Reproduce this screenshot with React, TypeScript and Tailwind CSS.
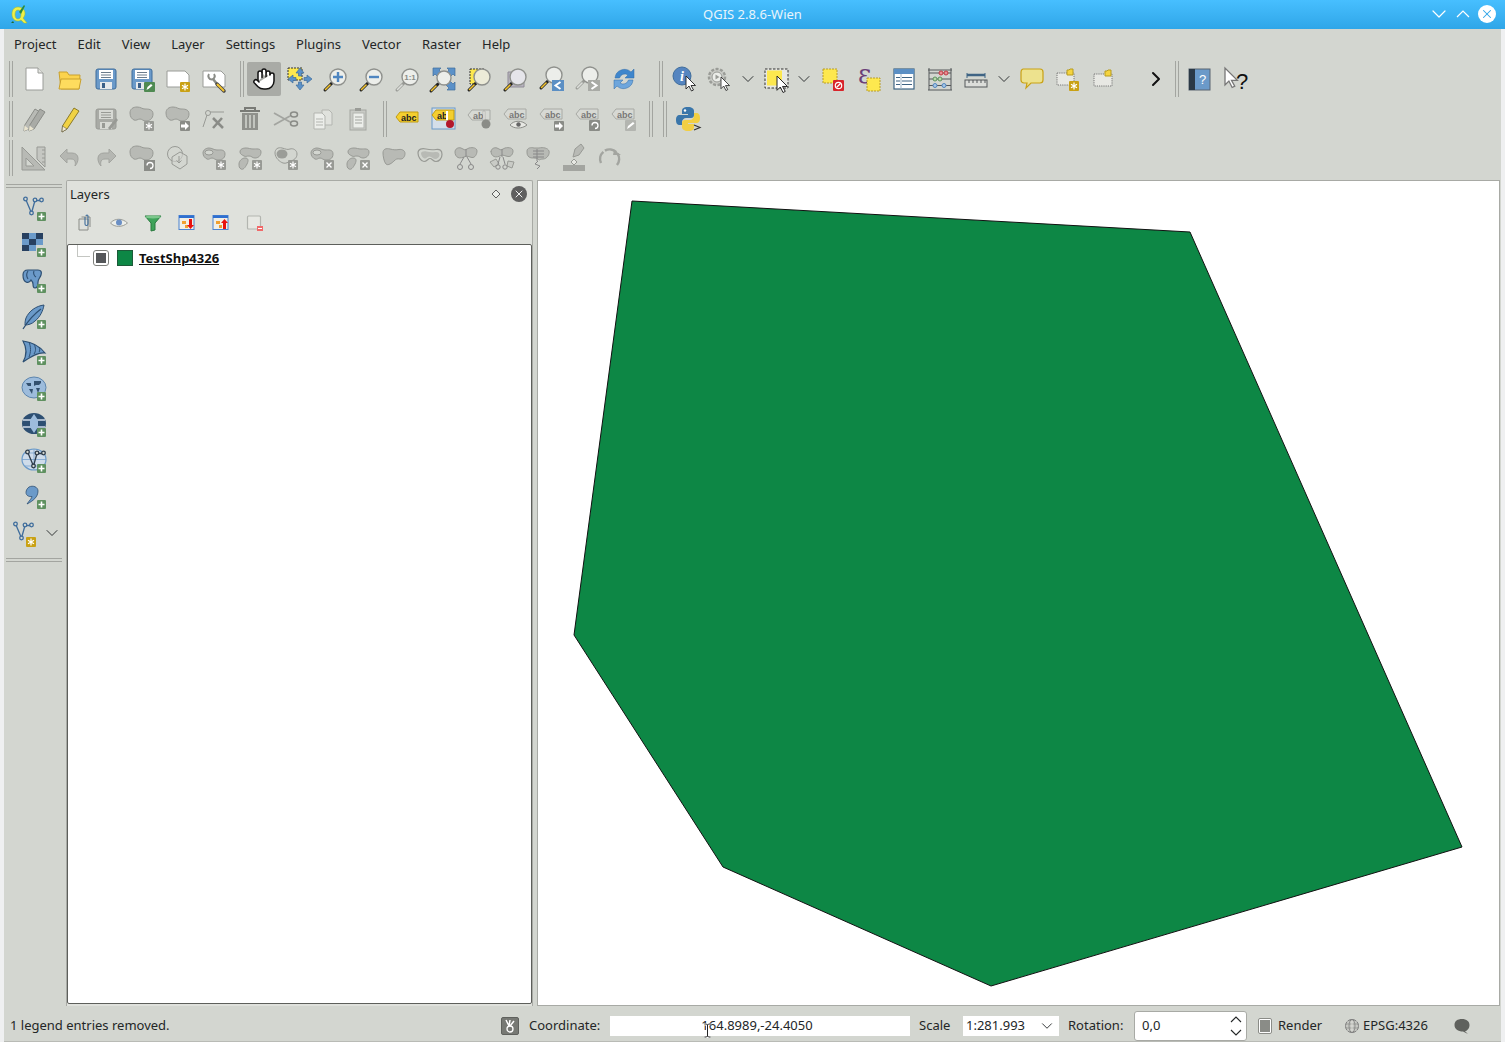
import React from "react";
import { Hand, ChevronDown, ChevronRight, X } from "lucide-react";

const GF = "#b8bab5";
const GS = "#989a95";
const BF = "#6b9ac9";
const BS = "#3f6d9c";

const S = ({ children, s = 28 }: { children?: React.ReactNode; s?: number }) => (
  <svg width={s} height={s} viewBox={`0 0 ${s} ${s}`} className="block shrink-0 overflow-visible">{children}</svg>
);
const Cell = ({ children, active }: { children?: React.ReactNode; active?: boolean }) => (
  <div className="w-9 h-9 shrink-0 flex items-center justify-center">
    <div className={`w-[34px] h-[34px] flex items-center justify-center rounded-[2px] ${active ? "bg-[#a9aba6]" : ""}`}>{children}</div>
  </div>
);
const Chev = ({ w = "w-5" }: { w?: string }) => (
  <div className={`${w} shrink-0 flex items-center justify-center text-[#232627]`}><ChevronDown size={20} strokeWidth={1.100} /></div>
);
const Sep = ({ cls }: { cls: string }) => (
  <div className={`${cls} shrink-0 h-[36px] flex gap-[2px]`}>
    <div className="w-px h-full bg-[#a3a5a0]" />
    <div className="w-px h-full bg-[#a3a5a0]" />
  </div>
);

const Cursor = ({ x, y, k = 1 }: { x: number; y: number; k?: number }) => (
  <path transform={`translate(${x} ${y}) scale(${k})`} d="M0 0v13l3-3 2.500 5 2-1-2.500-4.500h4.500z" fill="#fff" stroke="#222" strokeWidth="0.900" />
);
const Star = ({ x = 16, y = 16, f = GS }: { x?: number; y?: number; f?: string }) => (
  <g>
    <rect x={x} y={y} width="10" height="10" rx="1" fill={f} />
    <path transform={`translate(${x + 5} ${y + 5})`} d="M0-3.500V3.500M-3-1.800L3 1.800M-3 1.800L3-1.800" stroke="#fff" strokeWidth="1.200" />
  </g>
);
const Cross = ({ x = 16, y = 16 }: { x?: number; y?: number }) => (
  <g>
    <rect x={x} y={y} width="10" height="10" rx="1" fill={GS} />
    <path transform={`translate(${x} ${y})`} d="M2.500 2.500l5 5M7.500 2.500l-5 5" stroke="#fff" strokeWidth="1.400" />
  </g>
);
const Plus = ({ x = 17, y = 17 }: { x?: number; y?: number }) => (
  <g>
    <rect x={x} y={y} width="9" height="9" rx="1" fill="#5f9160" />
    <path transform={`translate(${x} ${y})`} d="M4.500 1.500v6M1.500 4.500h6" stroke="#fff" strokeWidth="1.600" />
  </g>
);
const Arrow = ({ x = 16, y = 16, f = "#8a8c87" }: { x?: number; y?: number; f?: string }) => (
  <g>
    <rect x={x} y={y} width="10" height="10" rx="1" fill={f} />
    <path transform={`translate(${x} ${y})`} d="M1 3.500h4V1l4 4-4 4V6.500H1z" fill="#fff" />
  </g>
);
const BLOB = "M2 8c0-4 3-6 7-6s5 2 8 2 8 0 8 5-4 7-7 7-4-2-6-2-4 2-6 1-4-3-4-7z";
const Blob = () => <path d={BLOB} fill={GF} stroke={GS} />;
const Ring = () => (
  <g>
    <path d="M3 9c0-3 3-5 6-5s5 2 8 2 8-1 8 4-4 6-7 6-4-2-6-2-3 2-5 1-4-3-4-6z" fill={GF} stroke={GS} />
    <ellipse cx="9" cy="8.500" rx="4" ry="2.500" fill="#d3d6d0" stroke={GS} />
  </g>
);
const Two = () => (
  <g>
    <path d="M4 8c0-3 3-4 6-4s4 1 7 1 8-1 8 3-3 6-6 6-3-2-6-2-3 1-5 0-4-2-4-4z" fill={GF} stroke={GS} />
    <path d="M3 20c0-3 3-6 6-6s4 2 2 6-4 6-6 5-2-3-2-5z" fill={GF} stroke={GS} />
  </g>
);
const Mag = ({ cx = 16, cy = 12, r = 8, f = "#eceeea", yellow = true, s = "#8f918d" }: { cx?: number; cy?: number; r?: number; f?: string; yellow?: boolean; s?: string }) => (
  <g>
    <line x1={cx - 6} y1={cy + 6} x2={cx - 13} y2={cy + 13} stroke={yellow ? "#222" : "#9a9c97"} strokeWidth="3" strokeLinecap="round" />
    <line x1={cx - 8} y1={cy + 8} x2={cx - 12.500} y2={cy + 12.500} stroke={yellow ? "#f2c32f" : "#dcdeda"} strokeWidth="1.600" strokeLinecap="round" />
    <circle cx={cx} cy={cy} r={r} fill={f} stroke={s} strokeWidth="1.400" />
  </g>
);
const Tag = ({ dx = 0, dy = 0, t = "abc", fill = "#d7d9d4", stroke = "#a8aaa5", col = "#777" }: { dx?: number; dy?: number; t?: string; fill?: string; stroke?: string; col?: string }) => (
  <g transform={`translate(${dx} ${dy})`}>
    <path d="M2 10l4-5h18v10H6z" fill={fill} stroke={stroke} />
    <text x="7" y="13.500" fontSize="9" fontWeight="700" fontFamily="Liberation Sans, sans-serif" fill={col}>{t}</text>
  </g>
);

/* Row 1 */
const NewFile = () => <S><path d="M6 3h12l5 5v17H6z" fill="#fff" stroke="#9a9c98" /><path d="M18 3v5h5" fill="#e3e4e0" stroke="#9a9c98" /></S>;
const Open = () => <S><path d="M3 7h8l2 3h11l-1 14H5z" fill="#fbd34d" stroke="#c9a12e" /><path d="M3 24l2-10h20l-2 10z" fill="#fedc5e" stroke="#c9a12e" /></S>;
const Floppy = ({ g = false }: { g?: boolean }) => (
  <g>
    <rect x="4" y="4" width="20" height="20" rx="2" fill={g ? "#a8aaa5" : "#6b9ac9"} stroke={g ? GS : "#3f6d9c"} />
    <rect x="7" y="5" width="14" height="9" fill={g ? "#d7d9d4" : "#fff"} />
    <path d="M9 7.500h10M9 10h10M9 12.500h10" stroke={g ? GS : "#6b7c8c"} />
    <rect x="8" y="17" width="12" height="7" fill={g ? "#d7d9d4" : "#e6e9ec"} />
    <rect x="10" y="18" width="3" height="5" fill={g ? GS : "#3a5f88"} />
  </g>
);
const Save = () => <S><Floppy /></S>;
const SaveAs = () => <S><Floppy /><rect x="16" y="17" width="11" height="10" rx="1" fill="#4f8a52" /><path d="M18.500 25l1-3 3.500-3 1.500 1.500-3.500 3z" fill="#fff" /></S>;
const NewPrint = () => <S><path d="M3 6h18l4 4v12H3z" fill="#fff" stroke="#9a9c98" /><Star x={16} y={17} f="#c9a114" /></S>;
const PrintMgr = () => (
  <S>
    <path d="M3 6h18l4 4v12H3z" fill="#fff" stroke="#9a9c98" />
    <path d="M9 9a3.500 3.500 0 0 0 3 5.500" fill="none" stroke="#8a8c87" strokeWidth="2" />
    <path d="M14 9a3.500 3.500 0 0 1-2 5.500" fill="none" stroke="#8a8c87" strokeWidth="2" />
    <path d="M13 14l4 5" stroke="#8a8c87" strokeWidth="2.500" />
    <path d="M17 19l7 7" stroke="#444" strokeWidth="3.500" strokeLinecap="round" />
    <path d="M17.500 19.500l6 6" stroke="#f2c32f" strokeWidth="2" strokeLinecap="round" />
  </S>
);
const PanSel = () => (
  <S>
    <rect x="2" y="3" width="14" height="12" fill="#fde84f" stroke="#333" strokeDasharray="2 1" />
    <path d="M14 3l4 5h-2.500v3h-3V8H10zM14 25l-4-5h2.500v-3h3v3H18zM2 14l5-4v2.500h3v3H7V18zM26 14l-5 4v-2.500h-3v-3h3V10z" fill="#5b91c8" stroke="#3f6d9c" strokeWidth="0.700" />
  </S>
);
const ZoomIn = () => <S><Mag /><path d="M16 7v10M11 12h10" stroke="#4f86c0" strokeWidth="2.400" /></S>;
const ZoomOut = () => <S><Mag /><path d="M11 12h10" stroke="#4f86c0" strokeWidth="2.400" /></S>;
const Zoom11 = () => <S><Mag yellow={false} /><text x="16" y="15" textAnchor="middle" fontSize="8" fontWeight="700" fontFamily="Liberation Sans, sans-serif" fill="#8a8c87">1:1</text></S>;
const ZoomFull = () => (
  <S>
    <path d="M3 3h8l-2 2 3 3-4 4-3-3-2 2zM25 3v8l-2-2-3 3-4-4 3-3-2-2zM25 25h-8l2-2-3-3 4-4 3 3 2-2z" fill="#5b91c8" stroke="#3f6d9c" strokeWidth="0.700" />
    <Mag cx={14} cy={13} r={7} />
  </S>
);
const ZoomSel = () => <S><rect x="4" y="4" width="14" height="15" fill="#fde84f" stroke="#333" strokeDasharray="2 1" /><Mag f="#ecebd8" /></S>;
const ZoomLayer = () => <S><path d="M6 7h16v15H6z" fill="#b9b5c0" stroke="#8f8b96" /><Mag f="#e5e5ea" /></S>;
const ZoomLast = () => <S><Mag cy={10} /><rect x="14" y="15" width="12" height="11" fill="#5b8fc4" /><path d="M22.500 17l-5 3.500 5 3.500" fill="none" stroke="#fff" strokeWidth="2" /></S>;
const ZoomNext = () => <S><Mag cy={10} yellow={false} /><rect x="14" y="15" width="12" height="11" fill="#a9aba6" /><path d="M17.500 17l5 3.500-5 3.500" fill="none" stroke="#fff" strokeWidth="2" /></S>;
const Refresh = () => (
  <S>
    <path d="M5 13a9.500 9.500 0 0 1 16-6l3-3v9h-9l3-3a5.500 5.500 0 0 0-8.500 3z" fill="#3f86cc" stroke="#2f6ba8" strokeWidth="0.500" />
    <path d="M23 15a9.500 9.500 0 0 1-16 6l-3 3v-9h9l-3 3a5.500 5.500 0 0 0 8.500-3z" fill="#6ea6dc" stroke="#2f6ba8" strokeWidth="0.500" />
  </S>
);
const Identify = () => <S><circle cx="12" cy="11" r="9" fill="#5585c0" stroke="#3f6d9c" /><text x="12" y="16" textAnchor="middle" fontSize="14" fontWeight="700" fontStyle="italic" fontFamily="Liberation Serif, serif" fill="#fff">i</text><Cursor x={16} y={11} /></S>;
const RunAct = () => <S><circle cx="11" cy="12" r="8" fill="#c9cbc6" stroke="#9a9c97" strokeWidth="2.500" strokeDasharray="3 1.500" /><circle cx="11" cy="12" r="5" fill="#eceeea" stroke={GS} /><path d="M9.500 9.500l4 2.500-4 2.500z" fill="#9a9c97" /><Cursor x={15} y={12} k={0.900} /></S>;
const Select = () => <S><rect x="3" y="4" width="23" height="19" fill="#e7e8e3" stroke="#333" strokeDasharray="2.500 1.500" /><rect x="5" y="5.500" width="15" height="15" fill="#fde84f" /><Cursor x={15} y={11} k={1.100} /></S>;
const Deselect = () => <S><rect x="5" y="4" width="14" height="14" fill="#fde84f" stroke="#b79c2a" strokeDasharray="2 1" /><rect x="15" y="15" width="11" height="11" rx="1" fill="#d8242a" /><circle cx="20.500" cy="20.500" r="3.200" fill="none" stroke="#fff" strokeWidth="1.200" /><path d="M18.500 22.500l4-4" stroke="#fff" strokeWidth="1.200" /></S>;
const SelExpr = () => <S><text x="4" y="18" fontSize="26" fontFamily="DejaVu Serif, serif" fill="#6b3f78">ε</text><rect x="13" y="13" width="13" height="13" fill="#fde84f" stroke="#b79c2a" strokeDasharray="2 1" /></S>;
const AttrTable = () => <S><rect x="4" y="4" width="20" height="20" fill="#fff" stroke="#3f6484" strokeWidth="1.200" /><rect x="4" y="4" width="20" height="5" fill="#5b8fc4" /><path d="M6 12.500h4M12 12.500h10M6 16h4M12 16h10M6 19.500h4M12 19.500h10" stroke="#3f6484" strokeWidth="1.200" /><path d="M11 9v15" stroke="#9fb4c6" /></S>;
const Abacus = () => (
  <S>
    <path d="M3 3v22M25 3v22M2 25h24M2 5h24" stroke="#55585a" strokeWidth="1" fill="none" />
    <path d="M3 8h22M3 14h22M3 20.500h22" stroke="#55585a" />
    <g fill="#e98d93" stroke="#c43b44"><circle cx="15" cy="8" r="2" /><circle cx="20" cy="8" r="2" /></g>
    <g fill="#b7dba9" stroke="#5f9160"><circle cx="9" cy="14" r="2" /><circle cx="14" cy="14" r="2" /></g>
    <g fill="#a7c6e4" stroke="#4f86c0"><circle cx="9" cy="20.500" r="2" /><circle cx="18" cy="20.500" r="2" /></g>
  </S>
);
const Ruler = () => <S><path d="M5 8v5M23 8v5" stroke="#3f6484" strokeWidth="1" /><path d="M5 10h18" stroke="#3f6484" strokeWidth="2.500" /><rect x="3" y="15" width="22" height="7" fill="#dcdeda" stroke="#55585a" /><path d="M7 15v3M11 15v3M15 15v3M19 15v3M23 15v3" stroke="#55585a" /></S>;
const Tip = () => <S><path d="M5 4h17a3 3 0 0 1 3 3v8a3 3 0 0 1-3 3H13l-5 5 1-5H6a3 3 0 0 1-3-3V7a3 3 0 0 1 2-3z" fill="#ede28e" stroke="#c9a114" strokeWidth="1.200" /></S>;
const BookmarkNew = () => <S><rect x="3" y="8" width="17" height="12" fill="#e7e8e3" stroke="#777" strokeDasharray="1.200 1" /><path d="M13 10V5h2l1-1h3v6z" fill="#f5d43f" stroke="#b79c1e" /><Star x={15} y={16} f="#c9a114" /></S>;
const Bookmarks = () => <S><rect x="4" y="9" width="18" height="12" fill="#e7e8e3" stroke="#777" strokeDasharray="1.200 1" /><path d="M15 11V6h2l1-1h3v6z" fill="#f5d43f" stroke="#b79c1e" /></S>;
const Help = () => <S><rect x="3" y="4" width="21" height="21" fill="#6b9ac9" stroke="#5a6570" /><rect x="3" y="4" width="6" height="21" fill="#2b3946" /><text x="16.500" y="19" textAnchor="middle" fontSize="13" fontFamily="Liberation Sans, sans-serif" fill="#fff">?</text></S>;
const WhatsThis = () => <S><path transform="translate(3 3) scale(1.300)" d="M0 0v13l3-3 2.500 5 2-1L5 9.500h4.500z" fill="#fff" stroke="#777" /><text x="20" y="24" textAnchor="middle" fontSize="22" fontFamily="Liberation Sans, sans-serif" fill="#111">?</text></S>;

/* Row 2 */
const PencilPath = ({ f, x = 0 }: { f: string; x?: number }) => (
  <g transform={`translate(${x} 0)`}>
    <path d="M18 4l5 3-11 17-5 2 .500-5.500z" fill={f} stroke="#8a8c87" />
    <path d="M7.500 20.500l4.500 3.500-5 2z" fill="#e9e4cf" />
  </g>
);
const Pencils = () => <S><PencilPath f={GF} x={-3} /><PencilPath f="#a9aba6" x={2} /></S>;
const Pencil = () => <S><path d="M18 3l5 3-12 18-5 3 .500-6z" fill="#f1d243" stroke="#8a7a2a" /><path d="M6.500 21l4.500 3-5 3z" fill="#f3ead0" stroke="#444" strokeWidth="0.500" /></S>;
const SaveEdit = () => <S><Floppy g /><path d="M16 23l8-10 2 2-8 10z" fill={GS} /></S>;
const Node = () => <S><circle cx="8" cy="8" r="2.500" fill="none" stroke={GS} /><path d="M7 10L3 22M10 7h14" stroke={GS} /><path d="M13 13l10 10M22 13l-9 10" stroke="#8a8c87" strokeWidth="2.500" /></S>;
const Trash = () => <S><path d="M9 5V3h10v2M4 6h20" stroke="#797b76" strokeWidth="2" fill="none" /><path d="M6 8h16v17H6z" fill="#8f918c" /><path d="M10 10v13M14 10v13M18 10v13" stroke="#d3d6d0" strokeWidth="1.500" /></S>;
const Scissors = () => <S><path d="M2 8l16 9M2 20l16-9" stroke="#a3a5a0" strokeWidth="1.800" /><ellipse cx="22" cy="9.500" rx="3.500" ry="2.500" fill="none" stroke="#8a8c87" strokeWidth="1.500" /><ellipse cx="22" cy="18.500" rx="3.500" ry="2.500" fill="none" stroke="#8a8c87" strokeWidth="1.500" /></S>;
const Copy = () => <S><path d="M14 5h7l3 3v12h-10z" fill="#e0e2dd" stroke="#b3b5b0" /><path d="M6 8h8l3 3v13H6z" fill="#eceeea" stroke="#b3b5b0" /><path d="M8 14h7M8 17h7M8 20h7" stroke="#b3b5b0" /></S>;
const Paste = () => <S><rect x="6" y="5" width="16" height="20" fill="#c9cbc6" stroke="#a3a5a0" /><rect x="9" y="8" width="11" height="15" fill="#eceeea" stroke="#b3b5b0" /><rect x="11" y="3" width="6" height="3" fill="#9a9c97" /><path d="M11 12h7M11 15h7M11 18h7" stroke="#a3a5a0" /></S>;
const LabelOn = () => <S><Tag dy={2} fill="#f4cf2f" stroke="#c29c10" col="#222" /></S>;
const LabelPin = () => <S><rect x="2" y="3" width="23" height="21" fill="#d5dfe9" stroke="#6b9ac9" /><Tag dy={0} t="ab" fill="#f4cf2f" stroke="#c29c10" col="#222" /><path d="M16 6h2v9h-2z" fill="#fff" /><circle cx="20" cy="19" r="4" fill="#b3182b" /></S>;
const LabelGray = () => <S><Tag t="ab" /><path d="M17 6h2v9h-2z" fill="#e7e8e3" stroke={GS} strokeWidth="0.500" /><circle cx="20" cy="19" r="4.500" fill="#8a8c87" /></S>;
const LabelEye = () => <S><Tag dy={-1} /><path d="M8 20c4-5 12-5 17 0-5 4-13 4-17 0z" fill="#e7e8e3" stroke="#8a8c87" /><circle cx="16.500" cy="19.500" r="2.200" fill="#666" /></S>;
const LabelMove = () => <S><Tag dy={-1} /><Arrow x={16} y={16} /></S>;
const LabelRot = () => <S><Tag dy={-1} /><rect x="15" y="15" width="11" height="11" rx="1" fill="#8a8c87" /><path d="M18 20.500a3 3 0 1 1 3 3" fill="none" stroke="#fff" strokeWidth="1.300" /></S>;
const LabelEdit = () => <S><Tag dy={-1} /><rect x="15" y="15" width="11" height="11" rx="1" fill="#b3b5b0" /><path d="M17 24l1-3 5-4 1.500 1.500-5 4z" fill="#fff" /></S>;
const Python = () => (
  <S>
    <path d="M14 2c-5 0-6 2-6 4v3h6v1H6c-3 0-4 2-4 5s1 5 4 5h2v-3c0-2 2-4 4-4h5c2 0 3-1 3-3V6c0-2-2-4-6-4z" fill="#3a76aa" />
    <path d="M14 26c5 0 6-2 6-4v-3h-6v-1h8c3 0 4-2 4-5s-1-5-4-5h-2v3c0 2-2 4-4 4h-5c-2 0-3 1-3 3v4c0 2 2 4 6 4z" fill="#f2cf43" />
    <circle cx="11" cy="5.500" r="1.200" fill="#fff" />
    <path d="M20 20l6 2.500-6 2.500" fill="none" stroke="#333" strokeWidth="1.200" />
  </S>
);

/* Row 3 */
const SetSquare = () => (
  <S>
    <path d="M2 3l23 23H2z" fill={GF} stroke={GS} />
    <path d="M6 14l8 8H6z" fill="#d3d6d0" stroke={GS} />
    <path d="M17 3h8v20l-8-8z" fill="#c5c7c2" stroke={GS} />
    <path d="M22 6h3M22 10h3M22 14h3M22 18h3" stroke={GS} />
  </S>
);
const Undo = () => <S><path d="M11 5l-7 7 7 7v-4h4c4 0 5 3 4 7 4-4 5-13-3-13h-5z" fill="#b5b7b2" stroke="#a3a5a0" /></S>;
const Redo = () => <S><path d="M17 5l7 7-7 7v-4h-4c-4 0-5 3-4 7-4-4-5-13 3-13h5z" fill="#b5b7b2" stroke="#a3a5a0" /></S>;
const BlobRot = () => <S><Blob /><rect x="16" y="16" width="11" height="11" fill="#8a8c87" /><path d="M19 21.500a3 3 0 1 1 3 3" fill="none" stroke="#fff" strokeWidth="1.300" /></S>;
const HexCirc = () => <S><circle cx="11" cy="10" r="7.500" fill="#d3d6d0" stroke={GS} /><path d="M16 8l7 4v8l-7 5-8-5v-7z" fill="#d3d6d0" fillOpacity="0.600" stroke={GS} /><path d="M15 12v7m-2.500-2.500L15 19l2.500-2.500" fill="none" stroke={GS} /></S>;
const RingStar = () => <S><Ring /><Star /></S>;
const TwoStar = () => <S><Two /><Star /></S>;
const InnerStar = () => <S><path d="M3 9c0-4 3-6 7-5s5 2 8 1 7 1 7 5-3 6-6 7-5 3-8 2-8-5-8-10z" fill="none" stroke={GS} /><ellipse cx="10" cy="10" rx="5.500" ry="4.500" fill="#9b9d98" /><Star /></S>;
const RingX = () => <S><Ring /><Cross /></S>;
const TwoX = () => <S><Two /><Cross /></S>;
const BlobLine = () => <S><path d="M3 9c0-4 3-5 7-4s6 1 9 .5 6 1 6 4-2 6-5 5.500-4 0-6 2-6 5-8 3-3-8-3-11z" fill={GF} stroke={GS} /></S>;
const BlobDouble = () => <S><path d="M2 9c0-4 4-5 8-4s6 1 10 .5 6 1 6 5-3 7-6 7-4-3-6-3-3 3-6 3-6-5-6-8.500z" fill="#d3d6d0" stroke={GS} strokeWidth="1.200" /><path d="M5 9.500c0-2 3-2.500 5.500-2s5 1 8.500.5 4.500 1 4.500 3-2 4-4.500 4-3-2.500-5.500-2.500-3 2.500-5 2-3.500-3.500-3.500-5z" fill={GF} /></S>;
const Split = () => <S><path d="M3 8c0-3 3-5 6-4l4 2 4-2c4-1 8 0 8 3s-2 7-5 6.500-5-2-7-1-5 2-7 1-3-3-3-5.500z" fill={GF} stroke={GS} /><path d="M14 5v8M12 13l-4 7M15 13l4 7" stroke="#888" /><circle cx="8" cy="23" r="2.500" fill="none" stroke="#888" /><circle cx="19" cy="23" r="2.500" fill="none" stroke="#888" /></S>;
const SplitP = () => <S><path d="M3 8c0-3 3-5 6-4l4 2 4-2c4-1 8 0 8 3s-2 6-5 5.500-5-2-7-1-5 2-7 1-3-3-3-5z" fill={GF} stroke={GS} /><path d="M2 18l6-3 3 5-5 3zM20 17l6 1-2 6-5-2z" fill="#c9cbc6" stroke={GS} /><path d="M14 5v8M12 13l-2 7M15 13l2 7" stroke="#888" /><circle cx="10" cy="23" r="2.200" fill="none" stroke="#888" /><circle cx="17" cy="23" r="2.200" fill="none" stroke="#888" /></S>;
const Merge = () => <S><path d="M3 7c0-3 4-4 7-3l5 0c4-1 9 0 10 3s-2 8-6 8-3 2-5 0-7 0-9-2-2-3-2-6z" fill={GF} stroke={GS} /><path d="M13 5v12M9 7h11M9 10h11M9 13h11" stroke="#888" /><path d="M14 17l-3 3 5 2-3 3" fill="none" stroke="#888" /></S>;
const Offset = () => <S><path d="M3 27v-6h22v6z" fill="#a3a5a0" /><path d="M14 21l-3-3 3-3 3 3z" fill="#e7e8e3" stroke={GS} /><path d="M13 13l2-8 6-5 3 4-5 7z" fill={GF} stroke={GS} /></S>;
const Rotate = () => <S><path d="M5 19A9.500 9.500 0 1 1 20 22" fill="none" stroke="#a3a5a0" strokeWidth="2.500" strokeDasharray="12 2" /><path d="M18 6l7 5h-8z" fill="#a3a5a0" /></S>;

/* Left bar */
const VPath = ({ dx = 0, dy = 0, s = BS }: { dx?: number; dy?: number; s?: string }) => (
  <g transform={`translate(${dx} ${dy})`} fill="none" stroke={s} strokeWidth="1.300">
    <path d="M4 5l5.500 13L13 5.500h6" />
    <circle cx="3.500" cy="4" r="1.800" fill="#d3d6d0" />
    <circle cx="9.500" cy="18" r="1.800" fill="#d3d6d0" />
    <circle cx="13" cy="5" r="1.800" fill="#d3d6d0" />
    <circle cx="19.500" cy="5" r="1.800" fill="#d3d6d0" />
  </g>
);
const LVec = () => <S><VPath dx={2} dy={0} /><Plus /></S>;
const LRas = () => (
  <S>
    <rect x="2" y="2" width="7" height="6" fill="#274060" /><rect x="9" y="2" width="7" height="6" fill={BF} /><rect x="16" y="2" width="7" height="6" fill="#274060" />
    <rect x="2" y="8" width="7" height="6" fill={BF} /><rect x="9" y="8" width="7" height="6" fill="#274060" /><rect x="16" y="8" width="7" height="6" fill={BF} />
    <rect x="2" y="14" width="7" height="6" fill="#274060" /><rect x="9" y="14" width="7" height="6" fill={BF} />
    <Plus />
  </S>
);
const LPg = () => (
  <S>
    <path d="M3 8c0-3 2-5 5-5h10c3 0 4 2 3 5s-3 4-3 7c0 4-1 6-3 6s-2-2-2-4c0-2-1-3-2-4-1 2-3 3-5 2s-3-4-3-7z" fill={BF} stroke="#2d4f72" strokeWidth="1.200" />
    <path d="M8 4c-2 3-2 5 0 8M14 4c-1 2 0 5 2 6" fill="none" stroke="#2d4f72" strokeWidth="1.100" />
    <Plus />
  </S>
);
const LFeather = () => <S><path d="M24 2c-8 1-15 6-18 13-1 3-1 5-1 7 3 0 7-1 10-4 5-4 8-10 9-16z" fill={BF} stroke="#2d4f72" /><path d="M3 26C8 18 14 11 21 6" fill="none" stroke="#2d4f72" strokeWidth="1.200" /><Plus /></S>;
const LSail = () => <S><path d="M3 2c8 1 16 4 22 12-6-1-12 2-22 9 4-7 4-14 0-21z" fill={BF} stroke="#2d4f72" strokeWidth="1.200" /><path d="M9 3c2 5 2 10 0 15M14 5c2 4 2 7 0 10M19 8c1 2 1 4 0 5" fill="none" stroke="#2d4f72" /><Plus /></S>;
const LWms = () => <S><ellipse cx="14" cy="12.500" rx="12" ry="10.500" fill="#9dbcdc" stroke="#5d85ad" /><path d="M6 8h5v3H8zM14 6h7v2l-2 2h-3l-2 1zM9 14h4l-1 5zM16 13h4l-2 5z" fill="#33506e" /><Plus /></S>;
const LWcs = () => <S><ellipse cx="14" cy="12.500" rx="12" ry="10.500" fill="#2d4f72" /><path d="M3 9h22M3 16h22" stroke="#cfdcea" strokeWidth="1.400" /><path d="M10 9h8v7h-8z" fill="#9dbcdc" /><path d="M14 3l-4 6h8zM14 22l-4-6h8z" fill="#9dbcdc" /><Plus /></S>;
const LWfs = () => <S><ellipse cx="14" cy="12.500" rx="12" ry="10.500" fill="#cfdcea" stroke={BF} strokeWidth="1.200" /><path d="M2 12.500h24M14 2v21M5 6h18M5 19h18" stroke={BF} strokeWidth="0.700" /><VPath dx={4} dy={1} s="#2d3b49" /><Plus /></S>;
const LComma = () => <S><path d="M9 4c4-2 9 0 9 4 0 6-5 10-11 13 2-3 5-6 5-7.500-3 .500-6-1-6-4 0-2 1-4 3-5.500z" fill={BF} stroke="#2d4f72" strokeWidth="0.800" /><Plus /></S>;
const LNew = () => <S><VPath dx={2} dy={1} /><Star x={16} y={18} f="#c9a114" /></S>;

const LTool = ({ children }: { children: React.ReactNode }) => <div className="ml-[12px]"><Cell>{children}</Cell></div>;

/* Layers toolbar */
const M = ({ children }: { children: React.ReactNode }) => <div className="w-[34px] h-6 shrink-0 flex items-center justify-center"><S s={20}>{children}</S></div>;
const WinIcon = ({ up }: { up?: boolean }) => (
  <g>
    <rect x="2" y="2.500" width="15" height="14" fill="#f1efe6" stroke="#4d84d1" />
    <rect x="2" y="2.500" width="15" height="2.500" fill="#2f6fd0" />
    <rect x="5" y="8" width="4" height="3" fill="#f0a030" />
    <rect x="8" y="12" width="3" height="3" fill="#f0a030" />
    <path d={up ? "M13.500 6l3.500 4h-2v6h-3v-6h-2z" : "M13.500 16l3.500-4h-2V6h-3v6h-2z"} fill="#e8120f" />
  </g>
);

const Row = ({ h, children }: { h: string; children: React.ReactNode }) => <div className={`${h} flex items-center shrink-0`}>{children}</div>;
const Handle = () => (
  <div className="w-3 shrink-0 h-[36px] pl-[5px] flex gap-[2px]">
    <div className="w-px h-full bg-[#a3a5a0]" />
    <div className="w-px h-full bg-[#a3a5a0]" />
  </div>
);

export default function App() {
  const row2a = [Pencils, Pencil, SaveEdit, () => <S><Blob /><Star /></S>, () => <S><Blob /><Arrow /></S>, Node, Trash, Scissors, Copy, Paste];
  const row2b = [LabelOn, LabelPin, LabelGray, LabelEye, LabelMove, LabelRot, LabelEdit];
  const row3 = [SetSquare, Undo, Redo, BlobRot, HexCirc, RingStar, TwoStar, InnerStar, RingX, TwoX, BlobLine, BlobDouble, Split, SplitP, Merge, Offset, Rotate];
  const r1a = [NewFile, Open, Save, SaveAs, NewPrint, PrintMgr];
  const r1b = [PanSel, ZoomIn, ZoomOut, Zoom11, ZoomFull, ZoomSel, ZoomLayer, ZoomLast, ZoomNext, Refresh];
  const left = [LVec, LRas, LPg, LFeather, LSail, LWms, LWcs, LWfs, LComma];

  return (
    <div className="w-[1505px] h-[1042px] overflow-hidden flex flex-col bg-[#d3d6d0] text-[13px] text-[#232627] [font-family:'Noto_Sans',sans-serif]">
      <div className="h-[29px] shrink-0 relative flex items-center justify-center bg-gradient-to-b from-[#47bfff] to-[#2fa6e8] text-[#e8f4fb]">
        <div className="absolute left-[7px] top-[2px]">
          <svg width="24" height="24" viewBox="0 0 24 24">
            <path d="M11 5c-4 0-6 3-6 7s2 7 6 7c1 0 2-.500 3-1l3 3h3l-4-5c1-1 2-2.500 2-5 0-3-3-6-7-6zm0 3c2 0 3 2 3 4.500S13 17 11 17s-3-2-3-4.500S9 8 11 8z" fill="#eef04a" stroke="#a8b81e" strokeWidth="0.500" />
            <path d="M12 10l5-7 1 1-4 8z" fill="#2b8a3e" />
            <path d="M6 19l-2 2 3 0z" fill="#1d6a2e" />
          </svg>
        </div>
        <span>QGIS 2.8.6-Wien</span>
        <div className="absolute right-[9px] top-[2px] flex items-center text-white">
          <ChevronDown size={24} strokeWidth={1.200} />
          <svg width="24" height="24" viewBox="0 0 24 24" fill="none" stroke="currentColor" strokeWidth="1.200"><path d="M6 15l6-6 6 6" /></svg>
          <div className="w-[18px] h-[18px] ml-[3px] rounded-full bg-white flex items-center justify-center text-[#2fa6e8]"><X size={14} strokeWidth={1.800} /></div>
        </div>
      </div>

      <div className="flex-1 min-h-0 flex flex-col border-x-4 border-x-[#eff0f1]">
        <div className="h-[31px] shrink-0 pl-[10px] flex items-center gap-[21px]">
          {["Project", "Edit", "View", "Layer", "Settings", "Plugins", "Vector", "Raster", "Help"].map((m) => <span key={m}>{m}</span>)}
        </div>

        <Row h="h-[38px]">
          <Handle />
          {r1a.map((I, i) => <Cell key={i}><I /></Cell>)}
          <Sep cls="w-[14px] pl-[8px]" />
          <Cell active><Hand size={24} strokeWidth={1.500} fill="#fff" color="#111" /></Cell>
          {r1b.map((I, i) => <Cell key={i}><I /></Cell>)}
          <Sep cls="w-[24px] pl-[17px]" />
          <Cell><Identify /></Cell>
          <Cell><RunAct /></Cell>
          <Chev />
          <Cell><Select /></Cell>
          <Chev />
          <Cell><Deselect /></Cell>
          <Cell><SelExpr /></Cell>
          <Cell><AttrTable /></Cell>
          <Cell><Abacus /></Cell>
          <Cell><Ruler /></Cell>
          <Chev />
          <Cell><Tip /></Cell>
          <Cell><BookmarkNew /></Cell>
          <Cell><Bookmarks /></Cell>
          <div className="w-4 shrink-0" />
          <div className="w-9 shrink-0 flex justify-center text-[#111]"><ChevronRight size={24} strokeWidth={2} /></div>
          <Sep cls="w-[8px] pl-px" />
          <Cell><Help /></Cell>
          <Cell><WhatsThis /></Cell>
        </Row>
        <div className="h-px shrink-0" />
        <Row h="h-[40px]">
          <Handle />
          {row2a.map((I, i) => <Cell key={i}><I /></Cell>)}
          <Sep cls="w-[14px] pl-[7px]" />
          {row2b.map((I, i) => <Cell key={i}><I /></Cell>)}
          <Sep cls="w-[14px] pl-[7px]" />
          <Sep cls="w-[14px] pl-[7px]" />
          <Cell><Python /></Cell>
        </Row>
        <Row h="h-[38px]">
          <Handle />
          {row3.map((I, i) => <Cell key={i}><I /></Cell>)}
        </Row>
        <div className="h-[3px] shrink-0" />

        <div className="h-[826px] shrink-0 flex">
          <div className="w-[62px] shrink-0 flex flex-col">
            <div className="h-[11px] shrink-0 ml-[2px] mr-[4px] pt-[4px] flex flex-col gap-[2px]">
              <div className="h-px bg-[#a3a5a0]" />
              <div className="h-px bg-[#a3a5a0]" />
            </div>
            {left.map((I, i) => <LTool key={i}><I /></LTool>)}
            <div className="h-9 flex items-center ml-[2px]">
              <Cell><LNew /></Cell>
              <Chev />
            </div>
            <div className="mt-[7px] ml-[2px] mr-[4px] flex flex-col gap-[2px]">
              <div className="h-px bg-[#a3a5a0]" />
              <div className="h-px bg-[#a3a5a0]" />
            </div>
          </div>

          <div className="w-[467px] shrink-0 flex flex-col bg-[#dfe1dc] border border-[#a8aaa5] rounded-t-[2px] border-b-0">
            <div className="h-[27px] shrink-0 pl-[3px] pr-[5px] flex items-center justify-between">
              <span>Layers</span>
              <div className="flex items-center gap-[8px] -translate-y-px">
                <svg width="14" height="14" viewBox="0 0 14 14"><path d="M7 3l4 4-4 4-4-4z" fill="#eceeea" stroke="#5f5f5f" /></svg>
                <div className="w-4 h-4 rounded-full bg-[#5f5f5f] flex items-center justify-center text-white"><X size={12} strokeWidth={1.800} /></div>
              </div>
            </div>
            <div className="h-[36px] shrink-0 pl-px pb-[6px] flex items-center">
              <M><path d="M4 6h9v11H4z" fill="#dfe1dc" stroke="#8a8c87" /><path d="M6.500 4h8.500v10" fill="none" stroke="#8a8c87" /><path d="M10 4v7a1.500 1.500 0 0 0 3 0V3a1 1 0 0 0-2 0" fill="none" stroke="#3f6d9c" strokeWidth="1.100" /></M>
              <M><path d="M1.500 10c4-5 12-5 17 0-5 4.500-13 4.500-17 0z" fill="#eceeea" stroke="#9a9c97" /><circle cx="10" cy="9.500" r="3" fill="#6b8fc4" /></M>
              <M><path d="M2 3h16l-6 7v7l-4 1v-8z" fill="#3ea35a" stroke="#2a7a3f" /><ellipse cx="10" cy="4" rx="8" ry="1.500" fill="#7cc78c" /></M>
              <M><WinIcon /></M>
              <M><WinIcon up /></M>
              <M><rect x="2.500" y="3" width="13" height="13" rx="1" fill="#e7e8e3" stroke="#b3b5b0" strokeWidth="1.200" /><rect x="12" y="13" width="6" height="5" fill="#f06a6a" /><path d="M13 15.500h4" stroke="#fff" /></M>
            </div>
            <div className="h-[760px] shrink-0 bg-white border border-[#5d5f5b] rounded-[2px] relative pl-[25px] pt-[5px] flex items-start">
              <div className="absolute left-[9px] top-0 w-[13px] h-[12px] border-l border-b border-[#c4c6c2]" />
              <div className="w-4 h-4 shrink-0 bg-white border border-[#7f817d] rounded-[3px] flex items-center justify-center">
                <div className="w-[10px] h-[10px] bg-[#55575a]" />
              </div>
              <div className="w-4 h-4 shrink-0 ml-2 bg-[#0d8745] border border-[#1c5a38]" />
              <span className="ml-[6px] font-bold underline leading-4 text-[#111]">TestShp4326</span>
            </div>
          </div>

          <div className="w-[963px] ml-[4px] shrink-0 bg-white border border-[#a8aaa5]">
            <svg width="961" height="824" viewBox="0 0 961 824" className="block">
              <polygon points="94,20 652,51 924,666 453,805 185,686 36,454" fill="#0d8745" stroke="#111" strokeWidth="1" />
            </svg>
          </div>
        </div>

        <div className="flex-1 min-h-0 pt-[5px] flex items-center relative border-b border-b-[#b9bbb6]">
          <span className="pl-[6px] w-[497px] shrink-0">1 legend entries removed.</span>
          <div className="w-[18px] h-[18px] shrink-0 rounded-[2px] bg-[#777974] border border-[#5f615d] flex items-center justify-center">
            <svg width="14" height="14" viewBox="0 0 14 14"><path d="M3 1l3 6M7 1l-1 6M11 2L7 7" stroke="#fff" strokeWidth="1.500" /><circle cx="7" cy="10" r="3" fill="none" stroke="#fff" strokeWidth="1.300" /></svg>
          </div>
          <span className="ml-[10px] w-[81px] shrink-0">Coordinate:</span>
          <div className="w-[300px] h-5 shrink-0 bg-white pr-[6px] flex items-center justify-center relative">
            <span>164.8989,-24.4050</span>
            <svg width="9" height="15" viewBox="0 0 9 15" className="absolute left-[93px] top-[7px]"><path d="M1.500 1h6M1.500 14h6M4.500 1v13" stroke="#fff" strokeWidth="3" /><path d="M1.500 1h2l1 1 1-1h2M1.500 14h2l1-1 1 1h2M4.500 2v11" stroke="#222" strokeWidth="1" fill="none" /></svg>
          </div>
          <span className="ml-[9px] w-[44px] shrink-0">Scale</span>
          <div className="w-[96px] h-5 shrink-0 bg-white pl-[3px] pr-[3px] flex items-center justify-between">
            <span>1:281.993</span>
            <ChevronDown size={18} strokeWidth={1.200} />
          </div>
          <span className="ml-[9px] w-[66px] shrink-0">Rotation:</span>
          <div className="w-[113px] h-[30px] shrink-0 bg-white border border-[#a8aaa5] rounded-[3px] pl-[7px] pr-[3px] flex items-center justify-between">
            <span>0,0</span>
            <svg width="14" height="24" viewBox="0 0 14 24" fill="none" stroke="#232627" strokeWidth="1.100"><path d="M2 8l5-5 5 5M2 16l5 5 5-5" /></svg>
          </div>
          <div className="ml-[11px] w-[14px] h-[16px] shrink-0 bg-white border border-[#8a8c87] rounded-[2px] flex items-center justify-center">
            <div className="w-[10px] h-[12px] bg-[#8a8c87]" />
          </div>
          <span className="ml-[6px] w-[66px] shrink-0">Render</span>
          <svg width="16" height="16" viewBox="0 0 16 16" className="shrink-0">
            <circle cx="8" cy="8" r="6.500" fill="#b3b5b0" stroke="#777" />
            <path d="M1.500 8h13M8 1.500v13M3 4h10M3 12h10" stroke="#e7e8e3" strokeWidth="0.800" />
            <ellipse cx="8" cy="8" rx="3" ry="6.500" fill="none" stroke="#777" strokeWidth="0.700" />
          </svg>
          <span className="ml-[3px] w-[90px] shrink-0">EPSG:4326</span>
          <svg width="18" height="18" viewBox="0 0 18 18" className="shrink-0">
            <path d="M9 2c4.500 0 7.500 2.500 7.500 6S14 14 12 14.300L15 17l-5-2.500C5 14.500 1.500 12 1.500 8S4.500 2 9 2z" fill="#5f615d" />
          </svg>
        </div>
      </div>
    </div>
  );
}
